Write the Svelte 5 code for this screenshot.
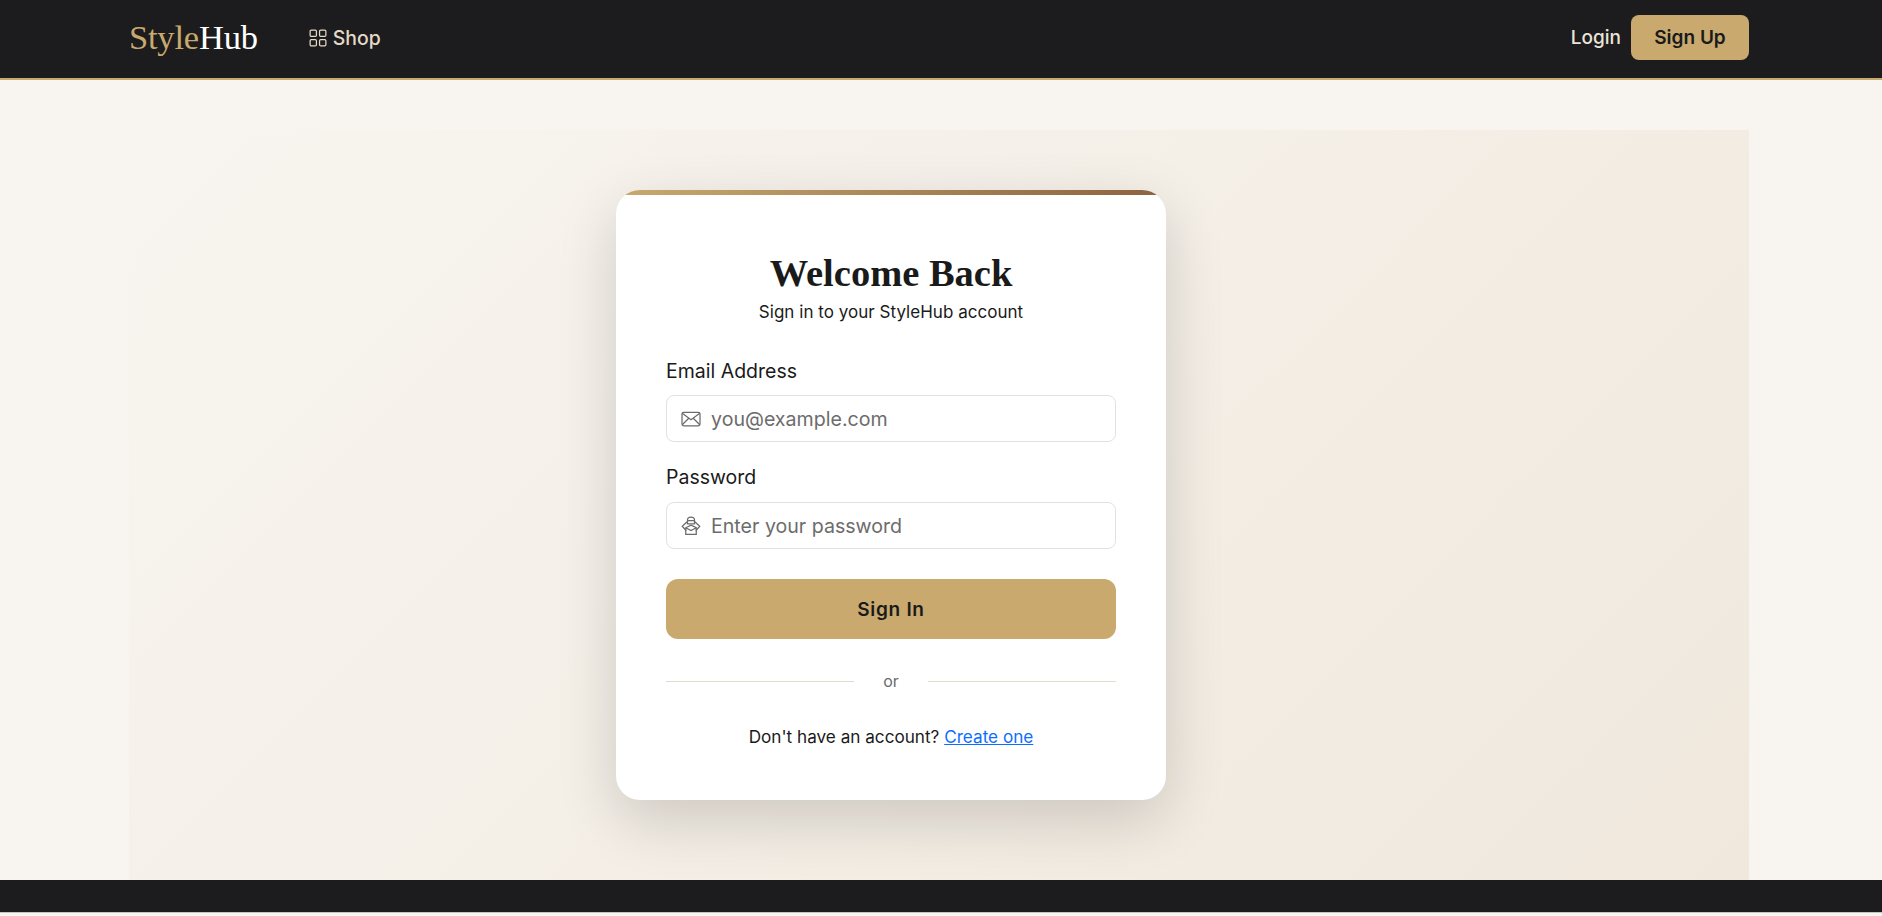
<script>
  let email = $state("");
  let password = $state("");
</script>

<div class="page">
  <header class="topbar">
    <div class="topbar-inner">
      <a class="logo" href="#home"><span class="logo-gold">Style</span><span class="logo-white">Hub</span></a>
      <a class="nav-link" href="#shop">
        <svg width="18" height="18" viewBox="0 0 16 16" fill="none" stroke="currentColor" stroke-width="1.1" aria-hidden="true">
          <rect x="1" y="1" width="5.6" height="5.6" rx="1" />
          <rect x="9.4" y="1" width="5.6" height="5.6" rx="1" />
          <rect x="1" y="9.4" width="5.6" height="5.6" rx="1" />
          <rect x="9.4" y="9.4" width="5.6" height="5.6" rx="1" />
        </svg>
        Shop
      </a>
      <div class="auth">
        <a class="login" href="#login">Login</a>
        <a class="signup" href="#signup">Sign Up</a>
      </div>
    </div>
  </header>

  <main class="hero">
    <section class="card">
      <div class="card-stripe"></div>
      <h1>Welcome Back</h1>
      <p class="sub">Sign in to your StyleHub account</p>

      <form class="form" onsubmit={(e) => e.preventDefault()}>
        <label class="label" for="email">Email Address</label>
        <div class="field">
          <svg width="20" height="20" viewBox="0 0 16 16" fill="none" stroke="currentColor" stroke-width="1" aria-hidden="true">
            <rect x="0.8" y="2.6" width="14.4" height="10.8" rx="1.4" />
            <path d="M1 3.4 8 8.6l7-5.2M1 12.6l5-5M15 12.6l-5-5" />
          </svg>
          <input id="email" type="email" placeholder="you@example.com" bind:value={email} />
        </div>

        <label class="label second" for="password">Password</label>
        <div class="field">
          <svg width="20" height="20" viewBox="0 0 16 16" fill="none" stroke="currentColor" stroke-width="1" aria-hidden="true">
            <path d="M5.2 4.4 1 8.2l3.2 3.6M10.8 4.4 15 8.2l-3.2 3.6" />
            <path d="M5.2 6.6V3.2a2.8 2.4 0 0 1 5.6 0v3.4" />
            <path d="M5.4 3.6h5.2M5.2 6.2h5.6" />
            <path d="M3.8 9.4 8 7.4l4.2 2v5.2H3.8zM3.8 9.4 8 11.6l4.2-2.2" />
          </svg>
          <input id="password" type="password" placeholder="Enter your password" bind:value={password} />
        </div>

        <button class="submit" type="submit">Sign In</button>
      </form>

      <div class="divider"><span>or</span></div>

      <p class="register">Don't have an account? <a href="#register">Create one</a></p>
    </section>
  </main>

  <footer class="footer"></footer>
</div>

<style>
  :global(body) {
    margin: 0;
    background: #f8f5f0;
    font-family: "Inter", "Liberation Sans", sans-serif;
    color: #1a1a1a;
  }

  .page {
    display: flex;
    flex-direction: column;
    min-height: 916px;
  }

  .topbar {
    background: #1c1c1e;
    border-bottom: 2px solid #c9a96e;
    height: 78px;
  }

  .topbar-inner {
    display: flex;
    align-items: center;
    box-sizing: border-box;
    height: 100%;
    padding: 0 133px 3px 129px;
  }

  .logo {
    font-family: "Liberation Serif", serif;
    font-size: 34.5px;
    text-decoration: none;
    letter-spacing: -0.2px;
  }

  .logo-gold {
    color: #c9a96e;
  }

  .logo-white {
    color: #fff;
  }

  .nav-link {
    display: flex;
    align-items: center;
    gap: 6px;
    margin-left: 51px;
    color: #e5d9c8;
    font-size: 19.4px;
    font-weight: 500;
    text-decoration: none;
  }

  .auth {
    display: flex;
    align-items: center;
    gap: 10px;
    margin-left: auto;
  }

  .login {
    color: #ece4d8;
    font-size: 19px;
    font-weight: 500;
    text-decoration: none;
  }

  .signup {
    display: flex;
    align-items: center;
    justify-content: center;
    width: 118px;
    height: 45px;
    background: #c9a96e;
    border-radius: 8px;
    color: #1a1a1a;
    font-size: 19px;
    font-weight: 600;
    text-decoration: none;
  }

  .hero {
    display: flex;
    justify-content: center;
    margin: 50px 133px 0 129px;
    padding: 60px 96px 80px 0;
    background: linear-gradient(135deg, #f8f5f0 0%, #f0e8dd 100%);
  }

  .card {
    position: relative;
    box-sizing: border-box;
    width: 550px;
    height: 610px;
    padding: 59px 50px 0;
    background: #fff;
    border-radius: 24px;
    overflow: hidden;
    box-shadow: 0 20px 60px rgba(0, 0, 0, 0.16);
  }

  .card-stripe {
    position: absolute;
    top: 0;
    left: 0;
    right: 0;
    height: 5px;
    background: linear-gradient(90deg, #c9a96e, #8b6340);
  }

  h1 {
    margin: 0;
    font-family: "Liberation Serif", serif;
    font-size: 38.5px;
    font-weight: 700;
    line-height: 48px;
    text-align: center;
  }

  .sub {
    margin: 2px 0 0;
    font-size: 17px;
    line-height: 26px;
    letter-spacing: 0.03px;
    text-align: center;
  }

  .form {
    display: flex;
    flex-direction: column;
    margin-top: 32px;
  }

  .label {
    font-size: 19.5px;
    line-height: 28px;
    margin-bottom: 10px;
  }

  .label.second {
    margin-top: 21px;
    margin-bottom: 11px;
  }

  .field {
    display: flex;
    align-items: center;
    gap: 10px;
    box-sizing: border-box;
    height: 47px;
    padding: 0 14px;
    border: 1px solid #dee2e6;
    border-radius: 8px;
    color: #6b6b6b;
  }

  input {
    flex: 1;
    min-width: 0;
    border: none;
    outline: none;
    padding: 0;
    background: transparent;
    font: inherit;
    font-size: 19.6px;
    color: #1a1a1a;
  }

  input::placeholder {
    color: #6c6c6c;
    opacity: 1;
  }

  .submit {
    height: 60px;
    margin-top: 30px;
    border: none;
    border-radius: 12px;
    background: #c9a96e;
    color: #1a1a1a;
    font: inherit;
    font-size: 19px;
    font-weight: 600;
    letter-spacing: 0.7px;
    cursor: pointer;
  }

  .divider {
    display: flex;
    align-items: center;
    gap: 29px;
    margin-top: 32px;
    color: #6b6b6b;
    font-size: 16px;
  }

  .divider::before,
  .divider::after {
    content: "";
    flex: 1;
    height: 1px;
    background: #e0dacf;
  }

  .register {
    margin: 33px 0 0;
    font-size: 17.15px;
    line-height: 26px;
    text-align: center;
  }

  .register a {
    color: #0d6efd;
  }

  .footer {
    height: 32px;
    background: #1c1c1e;
    border-bottom: 1px solid #c4c4c4;
  }
</style>
